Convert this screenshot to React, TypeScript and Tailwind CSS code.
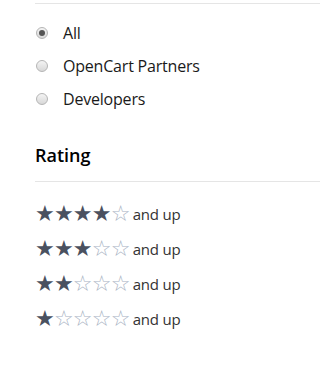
import React from "react";

const options = [
  { label: "All", checked: true },
  { label: "OpenCart Partners", checked: false },
  { label: "Developers", checked: false },
];

function Radio({ checked }: { checked: boolean }) {
  return (
    <span className="w-[12px] h-[12px] rounded-full border border-[#b5b5b5] bg-gradient-to-b from-[#f4f4f4] to-[#d8d8d8] flex items-center justify-center shrink-0">
      {checked && <span className="w-[6px] h-[6px] rounded-full bg-[#555]" />}
    </span>
  );
}

export default function App() {
  return (
    <div className="pl-[35px] pt-[3px] bg-white min-h-[379px] font-['Open_Sans','Liberation_Sans',sans-serif] text-[#1a1a1a]">
      <div className="border-t border-[#e5e5e5]" />
      <div className="pt-[18px] flex flex-col gap-[11px]">
        {options.map((o) => (
          <label key={o.label} className="flex items-center gap-[15px] h-[22px] pl-[1px] text-[16px] tracking-[-0.2px]">
            <Radio checked={o.checked} />
            <span>{o.label}</span>
          </label>
        ))}
      </div>

      <h3 className="mt-[33px] text-[18px] font-semibold text-black leading-[24px]">Rating</h3>
      <div className="mt-[14px] border-t border-[#e5e5e5]" />

      <div className="pt-[21px] flex flex-col gap-[13px]">
        {[4, 3, 2, 1].map((n) => (
          <div key={n} className="flex items-center h-[22px]">
            <span className="text-[22px] leading-none text-[#4a5160] font-['DejaVu_Sans',sans-serif] tracking-[-0.8px]">
              {"★".repeat(n)}
              <span className="text-[#a9b3c4]">{"☆".repeat(5 - n)}</span>
            </span>
            <span className="ml-[3px] text-[15px] tracking-[-0.2px] text-[#333]">and up</span>
          </div>
        ))}
      </div>
    </div>
  );
}
